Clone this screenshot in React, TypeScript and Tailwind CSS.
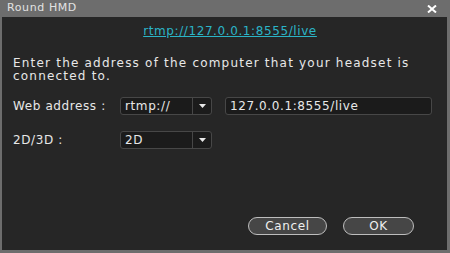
import React from 'react';

const font = { fontFamily: '"DejaVu Sans", "Liberation Sans", sans-serif' };

const Select: React.FC<{ value: string }> = ({ value }) => (
  <div className="flex h-[18px] w-[92px] rounded-[3px] border border-[#474747] bg-[#1b1b1b]">
    <div className="flex flex-1 items-center pl-[4px] text-[12px] tracking-[0.6px] text-[#e8e8e8]">{value}</div>
    <div className="flex w-[19px] items-center justify-center border-l border-[#474747]">
      <svg width="7" height="4" viewBox="0 0 7 4">
        <path d="M0 0 H7 L3.5 4 Z" fill="#e8e8e8" />
      </svg>
    </div>
  </div>
);

const PillButton: React.FC<{ label: string; width: string }> = ({ label, width }) => (
  <button
    className={`flex h-[18px] ${width} items-center justify-center rounded-full border-[1.5px] border-[#bdbdbd] bg-[#464646] text-[12px] tracking-[0.6px] text-[#efefef]`}
  >
    {label}
  </button>
);

export default function App() {
  return (
    <div className="flex h-[253px] w-[450px] flex-col bg-[#6d6d6d]" style={font}>
      <div className="flex h-[17px] shrink-0 items-center justify-between pl-[7px] pr-[13px]">
        <span className="text-[11px] tracking-[0.6px] text-[#e2e2e2]">Round HMD</span>
        <svg width="10" height="8" viewBox="0 0 10 8">
          <path d="M1 0.5 L9 7.5 M9 0.5 L1 7.5" stroke="#ffffff" strokeWidth="2" />
        </svg>
      </div>
      <div className="mb-[3px] ml-[2px] mr-[3px] flex flex-1 flex-col bg-[#262626] pl-[11px]">
        <div className="mt-[8px] text-center text-[12px] leading-[12px] tracking-[0.6px] text-[#2bb4c6] underline">
          rtmp://127.0.0.1:8555/live
        </div>
        <p className="mt-[20px] text-[12px] leading-[13px] tracking-[1.2px] text-[#e8e8e8]">
          Enter the address of the computer that your headset is
          <br />
          connected to.
        </p>
        <div className="mt-[14px] flex items-center">
          <span className="w-[107px] text-[12px] tracking-[0.6px] text-[#e8e8e8]">Web address :</span>
          <Select value="rtmp://" />
          <div className="ml-[13px] flex h-[18px] w-[207px] items-center rounded-[3px] border border-[#474747] bg-[#1b1b1b] pl-[4px] text-[12px] tracking-[0.6px] text-[#e8e8e8]">
            127.0.0.1:8555/live
          </div>
        </div>
        <div className="mt-[16px] flex items-center">
          <span className="w-[107px] text-[12px] tracking-[0.6px] text-[#e8e8e8]">2D/3D :</span>
          <Select value="2D" />
        </div>
        <div className="mt-[68px] flex gap-[16px] pl-[235px]">
          <PillButton label="Cancel" width="w-[79px]" />
          <PillButton label="OK" width="w-[71px]" />
        </div>
      </div>
    </div>
  );
}
